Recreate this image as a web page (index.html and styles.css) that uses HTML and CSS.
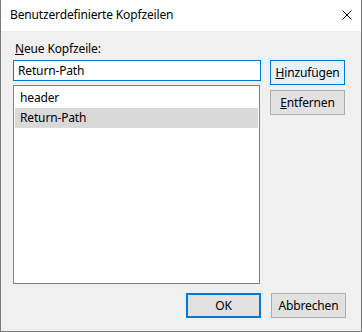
FILE: index.html
```html
<!DOCTYPE html>
<html lang="de">
<head>
    <meta charset="UTF-8">
    <title>Benutzerdefinierte Kopfzeilen</title>
    <link rel="stylesheet" href="styles.css">
</head>
<body>
    <div class="window">
        <div class="titlebar">
            <span class="title">Benutzerdefinierte Kopfzeilen</span>
            <svg class="close" width="10" height="10" viewBox="0 0 10 10">
                <path d="M0.5 0.5 L9.5 9.5 M9.5 0.5 L0.5 9.5" stroke="#000" stroke-width="1" fill="none"/>
            </svg>
        </div>
        <div class="content">
            <div class="main">
                <div class="left">
                    <label class="label" for="header"><u>N</u>eue Kopfzeile:</label>
                    <div class="textbox" id="header">Return-Path</div>
                    <div class="listbox">
                        <div class="item">header</div>
                        <div class="item selected">Return-Path</div>
                    </div>
                </div>
                <div class="right">
                    <div class="btn default"><u>H</u>inzufügen</div>
                    <div class="btn"><u>E</u>ntfernen</div>
                </div>
            </div>
            <div class="footer">
                <div class="btn ok">OK</div>
                <div class="btn">Abbrechen</div>
            </div>
        </div>
    </div>
</body>
</html>
```

FILE: styles.css
```css
* {
    box-sizing: border-box;
}
body {
    margin: 0;
    font-family: "Segoe UI", "Noto Sans", sans-serif;
    font-size: 12px;
    letter-spacing: -0.15px;
    color: #000;
    background: #fff;
}
.window {
    width: 362px;
    height: 332px;
    border: 1px solid #7a7a7a;
    border-top: none;
    background: #f0f0f0;
    display: flex;
    flex-direction: column;
}
.titlebar {
    height: 31px;
    background: #fff;
    display: flex;
    align-items: center;
    justify-content: space-between;
    padding: 0 9px 1px 9px;
}
.title {
    line-height: 16px;
}
.content {
    flex: 1;
    padding: 10px 15px 13px 12px;
    display: flex;
    flex-direction: column;
}
.main {
    display: flex;
    gap: 9px;
}
.left {
    width: 248px;
    display: flex;
    flex-direction: column;
}
.label {
    height: 19px;
    line-height: 16px;
    padding-left: 2px;
}
.textbox {
    height: 21px;
    border: 1px solid #0078d7;
    background: #fff;
    padding-left: 4px;
    line-height: 19px;
}
.listbox {
    margin-top: 4px;
    width: 247px;
    height: 199px;
    border: 1px solid #828282;
    background: #fff;
    padding: 1px;
}
.item {
    height: 20px;
    line-height: 20px;
    padding-left: 5px;
}
.item:first-child {
    margin-top: 1px;
}
.selected {
    background: #d9d9d9;
}
.right {
    padding-top: 19px;
    display: flex;
    flex-direction: column;
    gap: 5px;
}
.btn {
    width: 75px;
    height: 25px;
    border: 1px solid #adadad;
    background: #e1e1e1;
    display: flex;
    align-items: center;
    justify-content: center;
    line-height: 16px;
}
.btn.default {
    border-color: #0078d7;
    background: #e5f1fb;
}
.btn.ok {
    border: 2px solid #0078d7;
}
.footer {
    margin-top: 9px;
    display: flex;
    justify-content: flex-end;
    gap: 10px;
}
```
